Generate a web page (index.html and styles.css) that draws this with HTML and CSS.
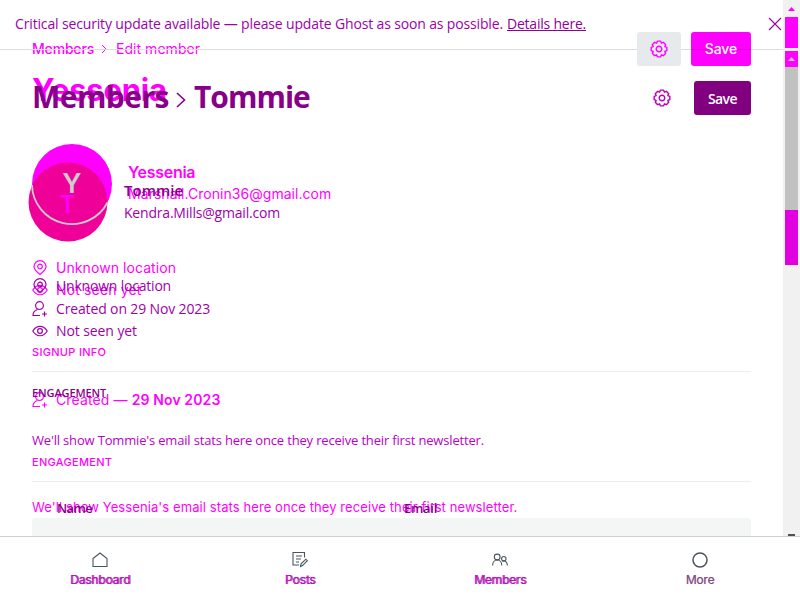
FILE: index.html
```html
<!DOCTYPE html>
<html lang="en">
<head>
<meta charset="utf-8">
<title>Members</title>
<link rel="stylesheet" href="styles.css">
</head>
<body>
<svg class="defs" aria-hidden="true">
  <symbol id="pin" viewBox="0 0 16 16"><path d="M8 14.500C5.500 12.500 2 10 2 6.600a6 6 0 0 1 12 0C14 10 10.500 12.500 8 14.500z"/><circle cx="8" cy="6.500" r="2.300"/></symbol>
  <symbol id="eye" viewBox="0 0 16 16"><path d="M.8 8C4.500 1.700 11.500 1.700 15.200 8 11.500 14.300 4.500 14.300.8 8z"/><circle cx="8" cy="8" r="2.400"/></symbol>
  <symbol id="user" viewBox="0 0 16 16"><circle cx="7.500" cy="4.600" r="3.900"/><path d="M5.500 8.500C2.500 9.500 1 12 1 14.500h7M12.500 10.500v5M10 13h5"/></symbol>
  <symbol id="gear" viewBox="-9 -9 18 18"><path stroke-linejoin="round" d="M-1.660-7.830L1.660-7.830 2.410-5.820 4.360-6.710 6.710-4.360 5.820-2.410 7.830-1.660 7.830 1.660 5.820 2.410 6.710 4.360 4.360 6.710 2.410 5.820 1.660 7.830-1.660 7.830-2.410 5.820-4.360 6.710-6.710 4.360-5.820 2.410-7.830 1.660-7.830-1.660-5.820-2.410-6.710-4.360-4.360-6.710-2.410-5.820z"/><circle r="2.800"/></symbol>
</svg>

<main class="stage">
  <section class="view view-new">
    <header class="topbar">
      <nav class="crumbs"><a class="crumb-root">Members</a><svg class="crumb-sep" viewBox="0 0 6 10"><path d="M1 1l4 4-4 4"/></svg><span class="crumb-page">Edit member</span></nav>
      <span class="gear-button"><svg class="gear"><use href="#gear"/></svg></span>
      <span class="save-new">Save</span>
    </header>
    <h1 class="title-new">Yessenia</h1>
    <div class="profile-new">
      <div class="avatar-new"></div>
      <div class="who-new"><h3>Yessenia</h3><p>Marshall.Cronin36@gmail.com</p></div>
    </div>
    <div class="meta-new">
      <p class="meta"><svg class="icon"><use href="#pin"/></svg><span class="loc">Unknown location</span></p>
      <p class="meta"><svg class="icon"><use href="#eye"/></svg><span class="seen">Not seen yet</span></p>
    </div>
    <h4 class="label signup">Signup info</h4>
    <p class="meta created"><svg class="icon"><use href="#user"/></svg><span>Created — <b>29 Nov 2023</b></span></p>
    <h4 class="label engagement">Engagement</h4>
    <p class="stats-new">We'll show Yessenia's email stats here once they receive their first newsletter.</p>
  </section>

  <section class="view view-old">
    <div class="alert"><span>Critical security update available — please update Ghost as soon as possible.</span><a>Details here.</a><svg class="close" viewBox="0 0 14 14"><path d="M1 1l12 12M13 1L1 13"/></svg></div>
    <header class="heading">
      <h2><span>Members</span><svg class="title-sep" viewBox="0 0 10 16"><path d="M1 1l7.500 7L1 15"/></svg><span class="title-name">Tommie</span></h2>
      <svg class="gear"><use href="#gear"/></svg>
      <span class="save-old">Save</span>
    </header>
    <div class="profile-old">
      <svg class="avatar-old" viewBox="0 0 84 98"><circle cx="39" cy="58" r="39.500"/><path d="M3 41A40 40 0 0 0 78.500 58.500"/><text class="initial-new" x="43" y="49">Y</text><text class="initial-old" x="38.500" y="69">T</text></svg>
      <div class="who-old"><h3>Tommie</h3><p>Kendra.Mills@gmail.com</p></div>
    </div>
    <div class="meta-old">
      <p class="meta"><svg class="icon"><use href="#pin"/></svg><span class="loc">Unknown location</span></p>
      <p class="meta"><svg class="icon"><use href="#user"/></svg><span class="made">Created on 29 Nov 2023</span></p>
      <p class="meta"><svg class="icon"><use href="#eye"/></svg><span class="seen">Not seen yet</span></p>
    </div>
    <h4 class="label engagement-old">Engagement</h4>
    <p class="stats-old">We'll show Tommie's email stats here once they receive their first newsletter.</p>
    <div class="columns"><span class="col-name">Name</span><span class="col-email">Email</span></div>
    <div class="panel"></div>
  </section>

  <aside class="scrollbar"><i class="arrow-up"></i><i class="thumb-top"></i><i class="arrow-box"><i class="arrow-up inner"></i></i><i class="thumb-mid"></i><i class="thumb-end"></i><i class="arrow-down"></i></aside>
</main>

<footer class="tabs">
  <a><svg viewBox="0 0 16 16"><path d="M1 6.500L8 1l7 5.500v8H1z"/></svg><span>Dashboard</span></a>
  <a><svg viewBox="0 0 16 16"><path d="M12.500 5.500v-5H1v12.500h6M4 4h6M4 7h5M4 10h3M8.500 14.500l.6-2.600 4.700-4.700 1.500 1.500-4.700 4.900z"/></svg><span>Posts</span></a>
  <a><svg viewBox="0 0 16 16"><circle cx="5.200" cy="5" r="2.900"/><path d="M.6 13.500c0-7.400 9.200-7.400 9.200 0M10.500 9.500c2.500-1.500 4.900.5 4.900 4"/><circle cx="11.800" cy="6.700" r="2.200"/></svg><span>Members</span></a>
  <a><svg viewBox="0 0 16 16" class="ring"><circle cx="8" cy="8" r="7"/></svg><span class="more">More</span></a>
</footer>
</body>
</html>
```
FILE: styles.css
```css
* { box-sizing: border-box; margin: 0; padding: 0; }
body { width: 800px; height: 600px; overflow: hidden; background: #fff; font: 14px/20px Inter, sans-serif; }
svg { fill: none; stroke: currentColor; flex: none; overflow: visible; }
.defs { position: absolute; width: 0; height: 0; }

.stage { position: relative; height: 536px; overflow: hidden; display: grid; grid-template-columns: 783px 17px; }
.view { grid-area: 1 / 1; height: 536px; display: flex; flex-direction: column; overflow: hidden; }
.view-new { padding: 32px 32px 0; color: #f0f; }
.view-old { font-family: "Open Sans", sans-serif; color: #a000a8; }

.topbar { height: 34px; display: flex; align-items: center; }
.crumbs { display: flex; align-items: center; margin-right: auto; }
.crumb-root { font-weight: 500; letter-spacing: -.18px; width: 69px; }
.crumb-sep { width: 6px; height: 10px; margin-right: 9px; }
.crumb-page { letter-spacing: .037px; }
.gear-button { width: 44px; height: 34px; background: #e7eaed; border-radius: 3px; display: grid; place-items: center; margin-right: 10px; z-index: 1; }
.gear { width: 18px; height: 18px; stroke-width: 1.4; }
.save-new { width: 60px; height: 34px; border-radius: 3px; background: linear-gradient(#f0f 17px, #e000e0 17px 18px, #f0f 18px); color: #fff; font-weight: 500; line-height: 34px; text-align: center; letter-spacing: -.1px; z-index: 1; }
.title-new { font-size: 31px; line-height: 40px; margin-top: 4px; letter-spacing: -.25px; }
.profile-new { display: flex; margin-top: 34px; height: 80px; }
.avatar-new { width: 80px; height: 80px; border-radius: 50%; background: #f0f; margin-right: 16px; }
.who-new h3 { font-size: 16px; font-weight: 600; line-height: 22px; letter-spacing: -.28px; margin-top: 17px; }
.who-new p { margin-top: 1px; letter-spacing: .045px; }
.meta { display: flex; align-items: center; height: 20px; }
.icon { width: 16px; height: 16px; margin-right: 8px; stroke-width: 1.2; }
.meta-new { margin-top: 34px; display: flex; flex-direction: column; gap: 2px; }
.view-new .loc { letter-spacing: .07px; }
.view-new .seen { letter-spacing: .15px; }
.label { font-size: 11px; font-weight: 500; text-transform: uppercase; letter-spacing: .3px; }
.signup { height: 30px; margin-top: 42px; border-bottom: 1px solid #ebeef0; }
.created { margin-top: 18px; letter-spacing: .12px; }
.created b { font-weight: 600; }
.engagement { height: 30px; margin-top: 42px; border-bottom: 1px solid #ebeef0; }
.stats-new { margin-top: 15px; font-size: 13px; letter-spacing: .09px; white-space: nowrap; }

.alert { height: 50px; flex: none; border-bottom: 1px solid #ddd; display: flex; align-items: center; padding: 0 1px 2px 15px; white-space: nowrap; letter-spacing: -.148px; }
.alert a { margin: 0 auto 0 4px; text-decoration: underline; letter-spacing: -.22px; color: #900096; }
.close { width: 14px; height: 14px; stroke-width: 1.1; }
.heading { display: flex; align-items: center; height: 34px; margin: 31px 32px 0; }
.heading h2 { display: flex; align-items: center; margin: -2px auto 0 0; color: #808; font-size: 30px; letter-spacing: -.55px; line-height: 34px; }
.title-sep { width: 10px; height: 16px; margin: 5px 8px 0 7px; stroke-width: 1.6; }
.title-name { letter-spacing: -.96px; }
.heading .gear { color: #b800b8; margin-right: 23px; }
.save-old { width: 57px; height: 34px; background: #800080; border-radius: 3px; color: #fff; font-weight: 600; line-height: 35px; text-align: center; letter-spacing: -.59px; }
.profile-old { display: flex; margin: 29px 0 0 29px; height: 98px; }
.avatar-old { width: 84px; height: 98px; margin-right: 11px; text-anchor: middle; }
.avatar-old circle { fill: #ee0099; stroke: none; }
.avatar-old path { stroke: #ccc; stroke-width: 1.8; }
.avatar-old text { stroke: none; }
.initial-new { font: 600 27px Inter, sans-serif; fill: #ccc; }
.initial-old { font: 600 25px "Open Sans", sans-serif; fill: #f0f; }
.who-old h3 { color: #808; font-size: 15px; font-weight: 600; line-height: 24px; margin-top: 34px; }
.who-old p { margin-top: 1px; letter-spacing: -.2px; }
.meta-old { margin: 34px 0 0 32px; display: flex; flex-direction: column; gap: 2.500px; }
.view-old .loc { letter-spacing: -.2px; }
.made { letter-spacing: -.14px; }
.view-old .seen { letter-spacing: -.09px; }
.engagement-old { margin: 42px 0 0 32px; font-weight: 600; letter-spacing: -.12px; color: #808; }
.stats-old { margin: 27px 0 0 32px; font-size: 13px; letter-spacing: -.169px; white-space: nowrap; color: #b800c8; }
.columns { margin: 48px 0 0 57px; display: grid; grid-template-columns: 347px 1fr; font-size: 13px; font-weight: 600; color: #808; }
.col-name { letter-spacing: -.65px; }
.col-email { letter-spacing: -.29px; }
.panel { margin: 0 32px; height: 18px; flex: none; background: #f4f6f6; border-radius: 3px 3px 0 0; }

.scrollbar { grid-area: 1 / 2; width: 17px; height: 536px; background: #f1f1f1; padding-left: 2px; display: flex; flex-direction: column; }
.scrollbar i { display: block; flex: none; width: 13px; }
.scrollbar .arrow-up { width: 7px; height: 4px; margin: 7px 0 6px 3px; background: #f0f; clip-path: polygon(50% 0, 100% 100%, 0 100%); }
.thumb-top { height: 31px; background: #f0f; }
.arrow-box { height: 16px; margin-top: 3px; background: #f0f; overflow: hidden; }
.scrollbar .inner { background: #c1c1c1; margin-top: 6px; }
.thumb-mid { height: 143px; background: #c1c1c1; }
.thumb-end { height: 55px; background: #e000e0; }
.scrollbar .arrow-down { width: 7px; height: 2px; margin: auto 0 0 3px; background: #505050; }

.tabs { height: 64px; border-top: 1px solid #c9d1d6; background: #fff; display: grid; grid-template-columns: repeat(4, 200px); }
.tabs a { display: flex; flex-direction: column; align-items: center; padding-top: 15px; color: #4b5560; font-size: 12px; font-weight: 400; letter-spacing: -.2px; }
.tabs svg { width: 16px; height: 16px; stroke-width: 1.1; }
.tabs .ring { stroke-width: 1.5; }
.tabs span { line-height: 16px; margin-top: 4px; color: #d400d8; text-shadow: 1px 0 #80508a; }
.tabs .more { color: #705070; text-shadow: .5px 0 #e080e4; }
```
